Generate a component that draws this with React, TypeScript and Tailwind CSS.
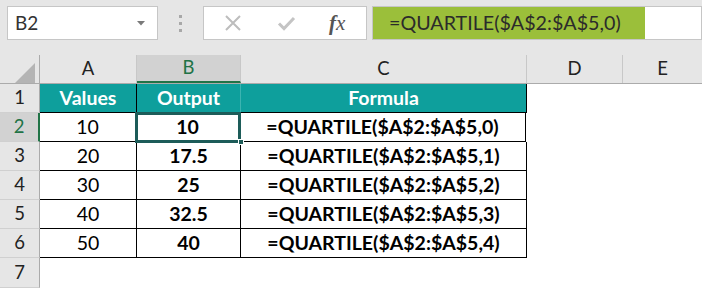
import React from "react";

const rows = [
  { n: 2, a: "10", b: "10", c: "=QUARTILE($A$2:$A$5,0)" },
  { n: 3, a: "20", b: "17.5", c: "=QUARTILE($A$2:$A$5,1)" },
  { n: 4, a: "30", b: "25", c: "=QUARTILE($A$2:$A$5,2)" },
  { n: 5, a: "40", b: "32.5", c: "=QUARTILE($A$2:$A$5,3)" },
  { n: 6, a: "50", b: "40", c: "=QUARTILE($A$2:$A$5,4)" },
];

export default function App() {
  return (
    <div className="relative w-[702px] h-[288px] overflow-hidden bg-white font-['Lato',sans-serif] text-black">
      {/* Toolbar */}
      <div className="flex h-[55px] bg-[#e6e6e6] pt-[6px] items-start">
        <div className="ml-[7px] flex h-[34px] w-[151px] items-center justify-between border border-[#c6c6c6] bg-white pl-[7px] pr-[12px]">
          <span className="text-[19px] text-[#333]">B2</span>
          <svg width="8" height="5" viewBox="0 0 8 5">
            <path d="M0 0 H8 L4 4.5 Z" fill="#7a7a7a" />
          </svg>
        </div>
        <div className="ml-[21px] mt-[9px] flex flex-col gap-[4px]">
          <div className="h-[3px] w-[3px] bg-[#a8a8a8]" />
          <div className="h-[3px] w-[3px] bg-[#a8a8a8]" />
          <div className="h-[3px] w-[3px] bg-[#a8a8a8]" />
        </div>
        <div className="ml-[21px] flex h-[34px] w-[164px] items-center border border-[#c6c6c6] bg-white">
          <svg className="ml-[20px]" width="18" height="18" viewBox="0 0 18 18">
            <path d="M2 2 L16 16 M16 2 L2 16" stroke="#bdbdbd" strokeWidth="2" />
          </svg>
          <svg className="ml-[35px]" width="19" height="18" viewBox="0 0 19 18">
            <path d="M2 9.5 L7 14.5 L17 4" stroke="#c4c4c4" strokeWidth="3" fill="none" />
          </svg>
          <span className="ml-[33px] font-['Liberation_Serif',serif] italic text-[21px] text-[#555] leading-none">
            <span className="font-bold">f</span>x
          </span>
        </div>
        <div className="ml-[5px] flex h-[34px] flex-1 border border-[#c6c6c6] bg-white">
          <div className="flex h-full w-[272px] items-center bg-[#9bbf3a] pl-[16px] text-[19.7px] text-[#2b2b2b]">
            =QUARTILE($A$2:$A$5,0)
          </div>
        </div>
      </div>

      {/* Column header row */}
      <div className="flex h-[29px] border-b border-[#ababab] bg-[#e6e6e6] text-[18.5px] text-[#222]">
        <div className="relative w-[40px] border-r border-[#ababab]">
          <svg className="absolute left-[15px] top-[8px]" width="20" height="20" viewBox="0 0 20 20">
            <path d="M0 20 L20 20 L20 0 Z" fill="#b4b4b4" />
          </svg>
        </div>
        <div className="flex w-[97px] items-center justify-center border-r border-[#c8c8c8]">A</div>
        <div className="flex w-[104px] items-center justify-center border-r border-[#c8c8c8] border-b-2 border-b-[#217346] bg-[#d2d2d2] text-[#217346]">B</div>
        <div className="flex w-[286px] items-center justify-center border-r border-[#c8c8c8]">C</div>
        <div className="flex w-[96px] items-center justify-center border-r border-[#c8c8c8]">D</div>
        <div className="flex flex-1 items-center justify-center">E</div>
      </div>

      {/* Row 1 */}
      <div className="flex h-[29px]">
        <div className="flex w-[40px] items-center justify-center border-r border-b border-r-[#ababab] border-b-[#d0d0d0] bg-[#e6e6e6] text-[18.5px] text-[#222]">1</div>
        <div className="flex w-[97px] items-center justify-center border-r border-b border-black bg-[#0e9f9c] text-[19.5px] font-bold text-white">Values</div>
        <div className="flex w-[104px] items-center justify-center border-r border-b border-r-[#3cb4b1] border-b-black bg-[#0e9f9c] text-[19.5px] font-bold text-white">Output</div>
        <div className="flex w-[286px] items-center justify-center border-r border-b border-black bg-[#0e9f9c] text-[19.5px] font-bold text-white">Formula</div>
        <div className="flex-1" />
      </div>

      {rows.map((r) => {
        const sel = r.n === 2;
        return (
          <div key={r.n} className="flex h-[29px]">
            <div
              className={
                sel
                  ? "flex w-[40px] items-center justify-center border-r-2 border-b border-r-[#217346] border-b-[#d0d0d0] bg-[#d2d2d2] text-[18.5px] text-[#217346]"
                  : "flex w-[40px] items-center justify-center border-r border-b border-r-[#ababab] border-b-[#d0d0d0] bg-[#e6e6e6] text-[18.5px] text-[#222]"
              }
            >
              {r.n}
            </div>
            <div className={sel ? "flex w-[96px] items-center justify-center border-r border-b border-black text-[19.5px]" : "flex w-[97px] items-center justify-center border-r border-b border-black text-[19.5px]"}>{r.a}</div>
            <div className="flex w-[104px] items-center justify-center border-r border-b border-black text-[19.5px] font-bold">{r.b}</div>
            <div className="flex w-[286px] items-center justify-center border-r border-b border-black text-[19.5px] font-bold">{r.c}</div>
            <div className="flex-1" />
          </div>
        );
      })}

      {/* Row 7 */}
      <div className="flex h-[30px]">
        <div className="flex w-[40px] items-center justify-center border-r border-b border-r-[#ababab] border-b-[#d0d0d0] bg-[#e6e6e6] text-[18.5px] text-[#222]">7</div>
      </div>

      {/* Selection overlay */}
      <div className="pointer-events-none absolute left-[135px] top-[112px] h-[31px] w-[106px] border-[3px] border-[#1d5c59]" />
      <div className="pointer-events-none absolute left-[238px] top-[139px] h-[6px] w-[6px] border border-white bg-[#1d5c59]" />
    </div>
  );
}
